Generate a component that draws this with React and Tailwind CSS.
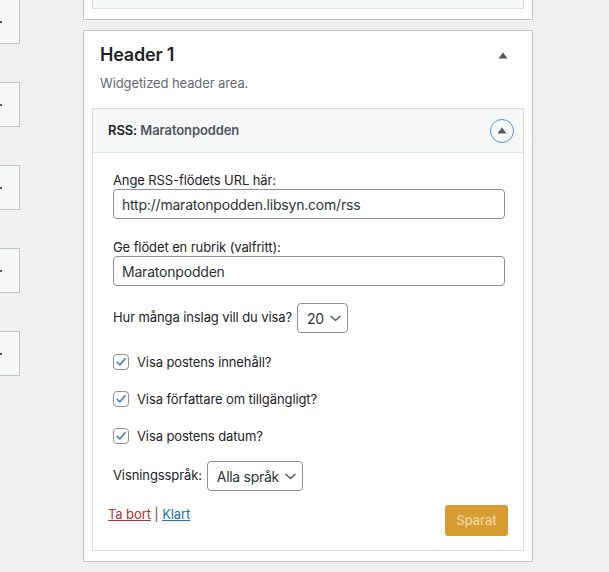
import React from "react";

function UpTriangle() {
  return (
    <svg width="10" height="7" viewBox="0 0 10 7">
      <polygon points="5,0.5 9.5,6.5 0.5,6.5" fill="#50575e" />
    </svg>
  );
}

function Chevron() {
  return (
    <svg width="11" height="7" viewBox="0 0 11 7" fill="none">
      <path d="M1 1.2 L5.5 5.5 L10 1.2" stroke="#50575e" strokeWidth="1.4" strokeLinecap="round" strokeLinejoin="round" />
    </svg>
  );
}

function Check({ label }) {
  return (
    <label className="flex items-center gap-[8px] leading-[18px]">
      <span className="flex h-[16px] w-[16px] items-center justify-center rounded-[4px] border border-[#8c8f94] bg-white">
        <svg width="12" height="12" viewBox="0 0 12 12" fill="none">
          <path d="M2.2 6.3 L4.8 8.9 L9.9 2.8" stroke="#5b88b8" strokeWidth="1.8" strokeLinecap="round" strokeLinejoin="round" />
        </svg>
      </span>
      <span>{label}</span>
    </label>
  );
}

function Select({ value }) {
  return (
    <div className="flex h-[30px] items-center gap-[6px] rounded-[4px] border border-[#8c8f94] bg-white pl-[9px] pr-[6px] text-[14px] tracking-[-0.3px] text-[#2c3338]">
      <span>{value}</span>
      <Chevron />
    </div>
  );
}

export default function App() {
  const sideBoxes = [0, 1, 2, 3, 4];

  return (
    <div className="flex h-[572px] w-full overflow-hidden bg-[#f0f0f1] font-['Inter',sans-serif] text-[13px] tracking-[-0.1px] text-[#1d2327]">
      {/* collapsed widgets on the left, cut off by the window */}
      <div className="-mt-px flex w-[20px] flex-col gap-[38px]">
        {sideBoxes.map((i) => (
          <div
            key={i}
            className="flex h-[45px] items-center border border-l-0 border-[#c3c4c7] bg-[#f6f7f7]"
          >
            <span className="h-[2px] w-[2px] bg-[#50575e]" />
          </div>
        ))}
      </div>

      <div className="ml-[63px] flex w-[450px] flex-col">
        {/* end of the sidebar above */}
        <div className="h-[20px] border-x border-b border-[#c3c4c7] bg-white px-2">
          <div className="h-[9px] border-x border-b border-[#dcdcde] bg-[#f6f7f7]" />
        </div>

        <div className="mt-[10px] border border-[#c3c4c7] bg-white px-2 pb-[10px]">
          <div className="flex items-center justify-between pl-2 pt-[12px]">
            <h2 className="text-[18px] font-semibold leading-[24px] tracking-[-0.2px]">Header 1</h2>
            <div className="mr-[10px] flex w-[23px] justify-center">
              <UpTriangle />
            </div>
          </div>
          <p className="mt-[7px] pl-2 leading-[18px] text-[#646970]">Widgetized header area.</p>

          <div className="mt-[16px] border border-[#dcdcde]">
            <div className="flex h-[44px] items-center justify-between border-b border-[#dcdcde] bg-[#f6f7f7] pl-[15px] pr-[9px]">
              <h3 className="font-semibold">
                RSS:<span className="text-[#50575e]"> Maratonpodden</span>
              </h3>
              <div className="flex h-[24px] w-[24px] items-center justify-center rounded-full border-[1.5px] border-[#4f94d4] pb-px">
                <UpTriangle />
              </div>
            </div>

            <div className="px-[15px] pb-[14px] pt-[18px]">
              <div className="pl-[5px] pr-[3px]">
                <div className="leading-[18px]">Ange RSS-flödets URL här:</div>
                <input
                  readOnly
                  value="http://maratonpodden.libsyn.com/rss"
                  className="block h-[30px] w-full rounded-[4px] border border-[#8c8f94] px-[8px] text-[14px] tracking-[-0.2px] text-[#2c3338] outline-none"
                />

                <div className="mt-[19px] leading-[18px]">Ge flödet en rubrik (valfritt):</div>
                <input
                  readOnly
                  value="Maratonpodden"
                  className="block h-[30px] w-full rounded-[4px] border border-[#8c8f94] px-[8px] text-[14px] tracking-[-0.2px] text-[#2c3338] outline-none"
                />

                <div className="mt-[17px] flex items-center gap-[5px]">
                  <span>Hur många inslag vill du visa?</span>
                  <Select value="20" />
                </div>

                <div className="mt-[20px] flex flex-col gap-[19px]">
                  <Check label="Visa postens innehåll?" />
                  <Check label="Visa författare om tillgängligt?" />
                  <Check label="Visa postens datum?" />
                </div>

                <div className="mt-[16px] flex items-center gap-[5px]">
                  <span>Visningsspråk:</span>
                  <Select value="Alla språk" />
                </div>
              </div>

              <div className="mt-[14px] flex items-start justify-between">
                <div className="leading-[18px]">
                  <a href="#" className="text-[#b32d2e] underline">Ta bort</a>
                  <span className="text-[#50575e]"> | </span>
                  <a href="#" className="text-[#2271b1] underline">Klart</a>
                </div>
                <button className="h-[31px] w-[63px] rounded-[3px] bg-[#d89d31] text-[13px] font-medium text-[#ecd5a5]">
                  Sparat
                </button>
              </div>
            </div>
          </div>
        </div>
      </div>
    </div>
  );
}
